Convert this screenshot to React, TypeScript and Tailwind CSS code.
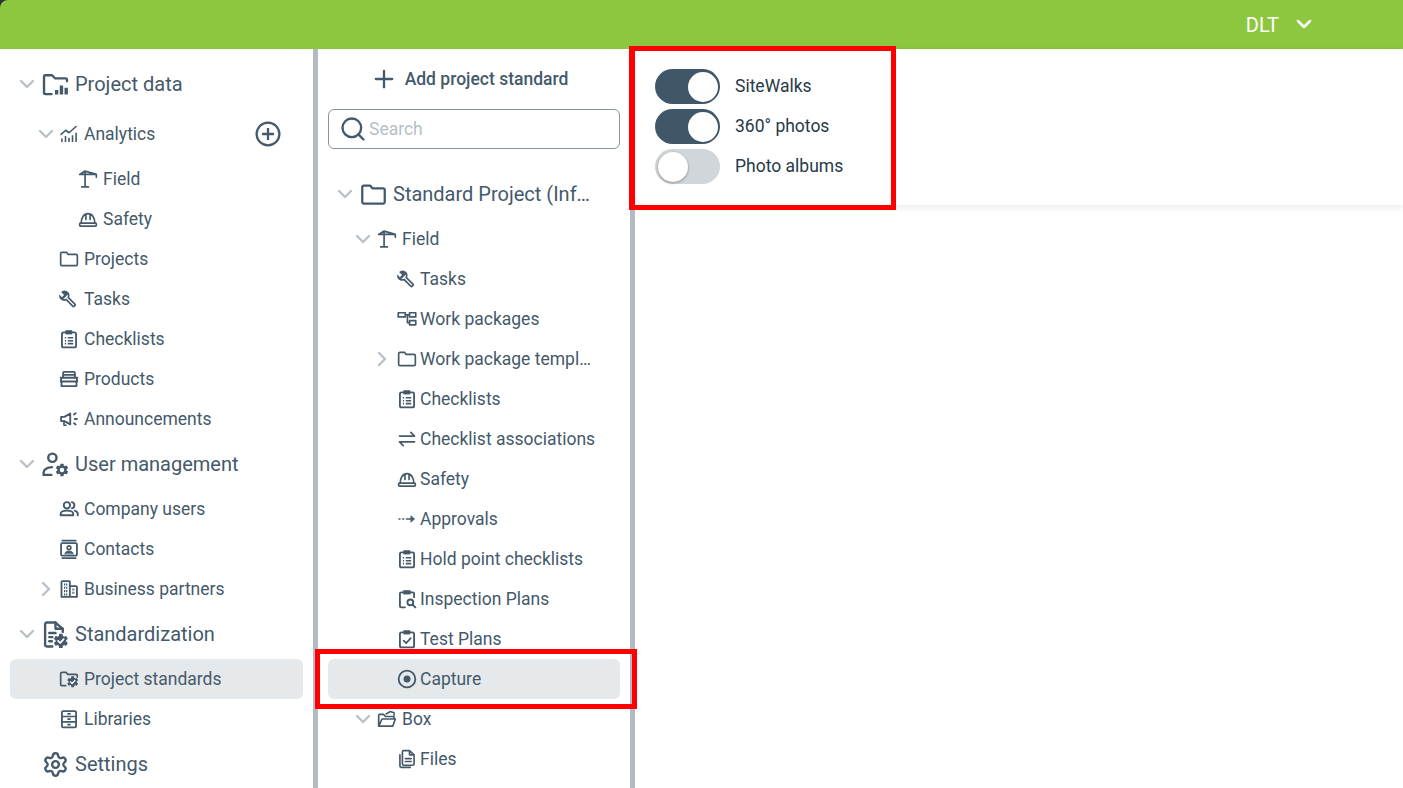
import React from "react";
import { ChevronDown, ChevronRight, Plus, Search, Settings } from "lucide-react";

type IconProps = { className?: string };

const COG =
  "M12,15.5A3.5,3.5 0 0,1 8.5,12A3.5,3.5 0 0,1 12,8.5A3.5,3.5 0 0,1 15.5,12A3.5,3.5 0 0,1 12,15.5M19.43,12.97C19.47,12.65 19.5,12.33 19.5,12C19.5,11.67 19.47,11.34 19.43,11L21.54,9.37C21.73,9.22 21.78,8.95 21.66,8.73L19.66,5.27C19.54,5.05 19.27,4.96 19.05,5.05L16.56,6.05C16.04,5.66 15.5,5.32 14.87,5.07L14.5,2.42C14.46,2.18 14.25,2 14,2H10C9.75,2 9.54,2.18 9.5,2.42L9.13,5.07C8.5,5.32 7.96,5.66 7.44,6.05L4.95,5.05C4.73,4.96 4.46,5.05 4.34,5.27L2.34,8.73C2.21,8.95 2.27,9.22 2.46,9.37L4.57,11C4.53,11.34 4.5,11.67 4.5,12C4.5,12.33 4.53,12.65 4.57,12.97L2.46,14.63C2.27,14.78 2.21,15.05 2.34,15.27L4.34,18.73C4.46,18.95 4.73,19.03 4.95,18.95L7.44,17.94C7.96,18.34 8.5,18.68 9.13,18.93L9.5,21.58C9.54,21.82 9.75,22 10,22H14C14.25,22 14.46,21.82 14.5,21.58L14.87,18.93C15.5,18.67 16.04,18.34 16.56,17.94L19.05,18.95C19.27,19.03 19.54,18.95 19.66,18.73L21.66,15.27C21.78,15.05 21.73,14.78 21.54,14.63L19.43,12.97Z";
const COG_SOLID =
  "M19.43,12.97C19.47,12.65 19.5,12.33 19.5,12C19.5,11.67 19.47,11.34 19.43,11L21.54,9.37C21.73,9.22 21.78,8.95 21.66,8.73L19.66,5.27C19.54,5.05 19.27,4.96 19.05,5.05L16.56,6.05C16.04,5.66 15.5,5.32 14.87,5.07L14.5,2.42C14.46,2.18 14.25,2 14,2H10C9.75,2 9.54,2.18 9.5,2.42L9.13,5.07C8.5,5.32 7.96,5.66 7.44,6.05L4.95,5.05C4.73,4.96 4.46,5.05 4.34,5.27L2.34,8.73C2.21,8.95 2.27,9.22 2.46,9.37L4.57,11C4.53,11.34 4.5,11.67 4.5,12C4.5,12.33 4.53,12.65 4.57,12.97L2.46,14.63C2.27,14.78 2.21,15.05 2.34,15.27L4.34,18.73C4.46,18.95 4.73,19.03 4.95,18.95L7.44,17.94C7.96,18.34 8.5,18.68 9.13,18.93L9.5,21.58C9.54,21.82 9.75,22 10,22H14C14.25,22 14.46,21.82 14.5,21.58L14.87,18.93C15.5,18.67 16.04,18.34 16.56,17.94L19.05,18.95C19.27,19.03 19.54,18.95 19.66,18.73L21.66,15.27C21.78,15.05 21.73,14.78 21.54,14.63L19.43,12.97Z";

function Svg({ className, children }: IconProps & { children: React.ReactNode }) {
  return (
    <svg viewBox="0 0 24 24" fill="none" stroke="currentColor" strokeWidth={2} strokeLinecap="round" strokeLinejoin="round" className={className}>
      {children}
    </svg>
  );
}

// cog with a white tick, used as a badge on two of the icons
function CheckCog({ transform }: { transform: string }) {
  return (
    <g transform={transform}>
      <path d={COG_SOLID} fill="currentColor" stroke="none" />
      <path d="M8 12l3 3 5-5.500" stroke="#fff" strokeWidth={2.400} fill="none" />
    </g>
  );
}

const ProjectDataIcon = (p: IconProps) => (
  <Svg {...p}>
    <path d="M8.500 20.500H3A1.200 1.200 0 0 1 1.800 19.300V5A1.200 1.200 0 0 1 3 3.800h6l2.500 2.700h9.500A1.200 1.200 0 0 1 22.200 7.700V9" strokeWidth={2.100} />
    <path d="M13 20.800v-4M17.300 20.800v-8M21.500 20.800v-6" strokeWidth={3} strokeLinecap="butt" />
  </Svg>
);
const AnalyticsIcon = (p: IconProps) => (
  <Svg {...p}>
    <path d="M2.500 12.500l5.500-5 4 3 8.500-7.500" strokeWidth={1.900} />
    <path d="M3.500 21.500v-4M7.800 21.500v-7M12 21.500v-5M16.200 21.500v-8M20.500 21.500v-11" strokeWidth={1.900} strokeLinecap="butt" />
  </Svg>
);
const CraneIcon = (p: IconProps) => (
  <Svg {...p}>
    <path d="M2 6.500h20v3.500M8.500 2.500v18.500M4.500 21.500h8M2 6.500l6.500-4 13.500 4" strokeWidth={2} />
  </Svg>
);
const HardHatIcon = (p: IconProps) => (
  <Svg {...p}>
    <path d="M3 20.500h18a1 1 0 0 0 1-1v-1.500a1 1 0 0 0-1-1H3a1 1 0 0 0-1 1v1.500a1 1 0 0 0 1 1z" />
    <path d="M3.800 17c0-6 3-11.500 8.200-11.500s8.200 5.500 8.200 11.500M9.500 6v6.500M14.500 6v6.500" />
  </Svg>
);
const FolderIcon = (p: IconProps) => (
  <Svg {...p}>
    <path d="M3.500 20A1.500 1.500 0 0 1 2 18.500v-13A1.500 1.500 0 0 1 3.500 4h5.500l2 2.500h9.500A1.500 1.500 0 0 1 22 8v10.500a1.500 1.500 0 0 1-1.500 1.500z" />
  </Svg>
);
const WrenchIcon = (p: IconProps) => (
  <svg viewBox="0 0 24 24" fill="currentColor" className={p.className}>
    <path d="M9.200 2.300a6 6 0 0 0-6.700 1.300l3.600 3.600-2.600 2.600-3.100-3.300a6 6 0 0 0 7.900 7.200l7.500 7.700a2.200 2.200 0 0 0 3.100 0l.9-.9a2.200 2.200 0 0 0 0-3.100l-7.600-7.600a6 6 0 0 0-3-7.500zm-1 2.200a4 4 0 0 1 2 5.200l-.3.800 8.500 8.500-1 1-8.500-8.700-.8.300a4 4 0 0 1-4.100-.8l1.300 1.200 5.300-5.300z" fillRule="evenodd" />
  </svg>
);
const ClipboardIcon = (p: IconProps) => (
  <Svg {...p}>
    <rect x="3.500" y="4" width="17" height="18" rx="2" strokeWidth={2.200} />
    <rect x="8.500" y="2" width="7" height="4" fill="currentColor" strokeWidth={1} />
    <path d="M7 10.500h1.500M7 14h1.500M7 17.500h1.500M10.500 10.500h6.500M10.500 14h6.500M10.500 17.500h6.500" strokeWidth={1.900} strokeLinecap="butt" />
  </Svg>
);
const ProductsIcon = (p: IconProps) => (
  <Svg {...p}>
    <path d="M5 10V4.500a1 1 0 0 1 1-1h12a1 1 0 0 1 1 1V10" strokeWidth={2.200} />
    <path d="M2 10.500h20M2 15h20M3 15h18v5.500H3zM2.500 10.500v4.500M21.500 10.500v4.500M5 7h14" strokeWidth={2.200} />
  </Svg>
);
const MegaphoneIcon = (p: IconProps) => (
  <Svg {...p}>
    <path d="M2.500 9.500h4l7-4v13l-7-4h-4z" strokeWidth={2.200} />
    <path d="M6 15v4.500h2.500" strokeWidth={2} />
    <path d="M18 6.500l2-1.500M19 12h2.500M18 17l2 1.500" strokeWidth={2.200} />
  </Svg>
);
const UserGearIcon = (p: IconProps) => (
  <svg viewBox="0 0 26 26" fill="none" stroke="currentColor" strokeWidth={2.300} strokeLinecap="round" className={p.className}>
    <circle cx="10" cy="6.500" r="4" />
    <path d="M1.500 22v-1c0-3 3-5 8-5.500M1.500 23h7.500" />
    <svg x="12" y="11" width="14.500" height="14.500" viewBox="0 0 24 24">
      <path d={COG} fill="currentColor" stroke="none" />
    </svg>
  </svg>
);
const UsersIcon = (p: IconProps) => (
  <Svg {...p}>
    <circle cx="9.500" cy="7.500" r="3.800" strokeWidth={2.300} />
    <path d="M2 19.500V18c0-2.500 3-4 7.500-4s7.500 1.500 7.500 4v1.500zM15.500 3.800a3.800 3.800 0 0 1 0 7.400M19 14c2 .7 3.500 2 3.500 4v1.500" strokeWidth={2.300} />
  </Svg>
);
const ContactsIcon = (p: IconProps) => (
  <Svg {...p}>
    <rect x="2.500" y="5" width="19" height="15" rx="1.500" strokeWidth={2.200} />
    <path d="M4 2h16M4 23h16" />
    <circle cx="12" cy="10.500" r="2.200" />
    <path d="M7 17.500c.5-2.200 2.500-3 5-3s4.500.8 5 3z" fill="currentColor" strokeWidth={1} />
  </Svg>
);
const BuildingIcon = (p: IconProps) => (
  <Svg {...p}>
    <path d="M3 21.500V3.500a1 1 0 0 1 1-1h8a1 1 0 0 1 1 1v18M13 8.500h7.500a1 1 0 0 1 1 1v12H3" strokeWidth={2.200} />
    <path d="M6 6.500h4M6 10.500h4M6 14.500h4M6 18.500h4M16 12.500h3M16 16.500h3" strokeWidth={2.500} strokeDasharray="1.500 1" strokeLinecap="butt" />
  </Svg>
);
const StandardizationIcon = (p: IconProps) => (
  <svg viewBox="0 0 26 26" fill="none" stroke="currentColor" strokeWidth={2.300} strokeLinecap="round" strokeLinejoin="round" className={p.className}>
    <path d="M10 24.500H4.500A1.500 1.500 0 0 1 3 23V3A1.500 1.500 0 0 1 4.500 1.500H13l7 6v3" />
    <path d="M13 1.500v6h7M7 11.500h6M7 15.500h3M7 19.500h2.500" />
    <CheckCog transform="translate(10 11) scale(.68)" />
  </svg>
);
const FolderCheckIcon = (p: IconProps) => (
  <Svg {...p}>
    <path d="M8 20H3.500A1.500 1.500 0 0 1 2 18.500v-13A1.500 1.500 0 0 1 3.500 4h5l2 2.500h10A1.500 1.500 0 0 1 22 8v1.500" />
    <CheckCog transform="translate(8.500 7.500) scale(.66)" />
  </Svg>
);
const LibrariesIcon = (p: IconProps) => (
  <Svg {...p}>
    <rect x="3.500" y="2.500" width="17" height="19.500" rx="1.500" strokeWidth={2.200} />
    <path d="M3.500 9h17M3.500 15.500h17M10 5.800h4M10 12.200h4M10 18.700h4" strokeWidth={2} strokeLinecap="butt" />
  </Svg>
);
const WorkPackagesIcon = (p: IconProps) => (
  <Svg {...p}>
    <rect x="1.500" y="4.500" width="8.500" height="5" strokeWidth={2} strokeLinecap="butt" />
    <rect x="15" y="4.500" width="7.500" height="5" strokeWidth={2} />
    <rect x="15" y="14" width="7.500" height="5" strokeWidth={2} />
    <path d="M10 7h5M12.500 7v9.500H15" strokeWidth={2} />
  </Svg>
);
const SwapIcon = (p: IconProps) => (
  <Svg {...p}>
    <path d="M3 8.500h18M16.500 4l4.500 4.500M21 15.500H3M7.500 20L3 15.500" />
  </Svg>
);
const ApprovalsIcon = (p: IconProps) => (
  <Svg {...p}>
    <path d="M2.500 12h1M7 12h1M11.500 12h7" />
    <path d="M17 8.500l4 3.500-4 3.500z" fill="currentColor" strokeWidth={1} />
  </Svg>
);
const InspectionIcon = (p: IconProps) => (
  <Svg {...p}>
    <path d="M9.500 22H5a1.500 1.500 0 0 1-1.500-1.500V5.500A1.500 1.500 0 0 1 5 4h2M17 4h2a1.500 1.500 0 0 1 1.500 1.500V10" strokeWidth={2.200} />
    <rect x="8" y="2" width="8" height="4" fill="currentColor" strokeWidth={1} />
    <circle cx="16" cy="16" r="3.500" strokeWidth={2.300} />
    <path d="M19 19l3 3" strokeWidth={2.300} />
  </Svg>
);
const TestPlanIcon = (p: IconProps) => (
  <Svg {...p}>
    <rect x="3.500" y="4" width="17" height="18" rx="2" strokeWidth={2.200} />
    <rect x="8.500" y="2" width="7" height="4" fill="currentColor" strokeWidth={1} />
    <path d="M8 14l3 3 5.500-6" />
  </Svg>
);
const CaptureIcon = (p: IconProps) => (
  <Svg {...p}>
    <circle cx="12" cy="12" r="10" strokeWidth={2.200} />
    <circle cx="12" cy="12" r="4.200" fill="currentColor" stroke="none" />
  </Svg>
);
const FolderOpenIcon = (p: IconProps) => (
  <Svg {...p}>
    <path d="M2 20.500V8a1.500 1.500 0 0 1 1.500-1.500H8l2 2.500h9a1.500 1.500 0 0 1 1.500 1.500V12M2 20.500h17l3-8.500H6z" />
    <path d="M11 6l5-3 4.500 1.500V8" strokeWidth={1.800} />
  </Svg>
);
const FilesIcon = (p: IconProps) => (
  <Svg {...p}>
    <path d="M8 2h7l5.500 5v11a1.500 1.500 0 0 1-1.500 1.500H8A1.500 1.500 0 0 1 6.500 18V3.500A1.500 1.500 0 0 1 8 2zM15 2v5h5.500M10 11.500h7M10 15h7" />
    <path d="M3.500 7v13.500A1.500 1.500 0 0 0 5 22h11" />
  </Svg>
);
const PlusCircleIcon = (p: IconProps) => (
  <Svg {...p}>
    <circle cx="12" cy="12" r="10.500" strokeWidth={2.100} />
    <path d="M12 6.500v11M6.500 12h11" strokeWidth={2.100} strokeLinecap="butt" />
  </Svg>
);

function Row({
  pad,
  slot,
  chevron,
  icon,
  label,
  big,
  active,
  right,
  className = "",
}: {
  pad: string;
  slot: string;
  chevron?: "down" | "right";
  icon: React.ReactNode;
  label: string;
  big?: boolean;
  active?: boolean;
  right?: React.ReactNode;
  className?: string;
}) {
  return (
    <div
      className={`flex items-center rounded-md ${pad} ${big ? "h-12 text-[20px]" : "h-10 text-[17.500px]"} ${active ? "bg-[#e6e9ec]" : ""} ${className}`}
    >
      <span className="flex w-5 shrink-0 justify-center text-[#b9c1c7]">
        {chevron === "down" && <ChevronDown className="h-6 w-6 shrink-0" strokeWidth={2.400} />}
        {chevron === "right" && <ChevronRight className="h-6 w-6 shrink-0" strokeWidth={2.400} />}
      </span>
      <span className={`flex shrink-0 items-center ${slot}`}>{icon}</span>
      <span className="truncate">{label}</span>
      {right}
    </div>
  );
}

function Toggle({ label, on }: { label: string; on: boolean }) {
  return (
    <div className="flex items-center gap-[15px]">
      <div className={`flex h-[35px] w-[65px] items-center rounded-full p-[2.500px] ${on ? "justify-end bg-[#3f5768]" : "justify-start bg-[#d1d6da]"}`}>
        <div className={`h-[30px] w-[30px] rounded-full bg-white ${on ? "" : "shadow-[0_1px_3px_rgba(0,0,0,0.35)]"}`} />
      </div>
      <span className="text-[17.500px] text-[#263a47]">{label}</span>
    </div>
  );
}

const L1 = "pl-[26px]";
const L2 = "pl-[45px]";
const SLOT1 = "w-7 pl-[3px]";
const ICON = "h-5 w-5";
const BIG = "h-[27px] w-[27px]";

function Sidebar() {
  return (
    <aside className="w-[313px] shrink-0 overflow-hidden px-[10px] pt-[11px]">
      <Row big pad="pl-[7px]" slot="w-[38px] pl-[5px]" chevron="down" icon={<ProjectDataIcon className={BIG} />} label="Project data" />
      <Row
        pad={L1}
        slot={SLOT1}
        chevron="down"
        icon={<AnalyticsIcon className={ICON} />}
        label="Analytics"
        className="!h-[51px] pt-[1px]"
        right={<PlusCircleIcon className="ml-auto mr-[22px] h-[26px] w-[26px] shrink-0" />}
      />
      <Row pad={L2} slot={SLOT1} icon={<CraneIcon className={ICON} />} label="Field" />
      <Row pad={L2} slot={SLOT1} icon={<HardHatIcon className={ICON} />} label="Safety" />
      <Row pad={L1} slot={SLOT1} icon={<FolderIcon className={ICON} />} label="Projects" />
      <Row pad={L1} slot={SLOT1} icon={<WrenchIcon className={ICON} />} label="Tasks" />
      <Row pad={L1} slot={SLOT1} icon={<ClipboardIcon className={ICON} />} label="Checklists" />
      <Row pad={L1} slot={SLOT1} icon={<ProductsIcon className={ICON} />} label="Products" />
      <Row pad={L1} slot={SLOT1} icon={<MegaphoneIcon className={ICON} />} label="Announcements" />
      <Row big pad="pl-[7px]" slot="w-[38px] pl-[5px]" chevron="down" icon={<UserGearIcon className={BIG} />} label="User management" className="my-[1px]" />
      <Row pad={L1} slot={SLOT1} icon={<UsersIcon className={ICON} />} label="Company users" />
      <Row pad={L1} slot={SLOT1} icon={<ContactsIcon className={ICON} />} label="Contacts" />
      <Row pad={L1} slot={SLOT1} chevron="right" icon={<BuildingIcon className={ICON} />} label="Business partners" />
      <Row big pad="pl-[7px]" slot="w-[38px] pl-[5px]" chevron="down" icon={<StandardizationIcon className={BIG} />} label="Standardization" className="my-[1px]" />
      <Row active pad={L1} slot={SLOT1} icon={<FolderCheckIcon className={ICON} />} label="Project standards" />
      <Row pad={L1} slot={SLOT1} icon={<LibrariesIcon className={ICON} />} label="Libraries" />
      <Row big pad="pl-[7px]" slot="w-[38px] pl-[5px]" icon={<Settings className={BIG} strokeWidth={2.100} />} label="Settings" className="mt-[1px]" />
    </aside>
  );
}

const M1 = "pl-[25px]";
const M2 = "pl-[44px]";
const MSLOT = "w-7 pl-[5px]";

function StandardsTree() {
  return (
    <section className="w-[322px] shrink-0 overflow-hidden border-x-[5px] border-[#b1bbc3] px-[10px]">
      <div className="flex h-[60px] items-center justify-center gap-[7px] pr-[10px] font-medium text-[17.500px]">
        <Plus className="h-7 w-7" strokeWidth={2} />
        Add project standard
      </div>
      <div className="flex h-10 items-center rounded-md border border-[#8696a1] pl-[10px]">
        <Search className="h-7 w-7 shrink-0" strokeWidth={2} />
        <span className="ml-[2px] pt-[1px] text-[17.500px] text-[#b7bfc5]">Search</span>
      </div>
      <div className="pt-[21px]">
        <Row big pad="pl-[7px]" slot="w-[38px] pl-[5px]" chevron="down" icon={<FolderIcon className="h-[27px] w-[27px]" />} label="Standard Project (Infrastructure)" className="mb-[1px] pr-[28px]" />
        <Row pad={M1} slot="w-[29px] pl-[4px]" chevron="down" icon={<CraneIcon className={ICON} />} label="Field" />
        <Row pad={M2} slot={MSLOT} icon={<WrenchIcon className={ICON} />} label="Tasks" />
        <Row pad={M2} slot={MSLOT} icon={<WorkPackagesIcon className={ICON} />} label="Work packages" />
        <Row pad={M2} slot={MSLOT} chevron="right" icon={<FolderIcon className={ICON} />} label="Work package templates" className="pr-[28px]" />
        <Row pad={M2} slot={MSLOT} icon={<ClipboardIcon className={ICON} />} label="Checklists" />
        <Row pad={M2} slot={MSLOT} icon={<SwapIcon className={ICON} />} label="Checklist associations" />
        <Row pad={M2} slot={MSLOT} icon={<HardHatIcon className={ICON} />} label="Safety" />
        <Row pad={M2} slot={MSLOT} icon={<ApprovalsIcon className={ICON} />} label="Approvals" />
        <Row pad={M2} slot={MSLOT} icon={<ClipboardIcon className={ICON} />} label="Hold point checklists" />
        <Row pad={M2} slot={MSLOT} icon={<InspectionIcon className={ICON} />} label="Inspection Plans" />
        <Row pad={M2} slot={MSLOT} icon={<TestPlanIcon className={ICON} />} label="Test Plans" />
        <Row active pad={M2} slot={MSLOT} icon={<CaptureIcon className={ICON} />} label="Capture" />
        <Row pad={M1} slot="w-[29px] pl-[4px]" chevron="down" icon={<FolderOpenIcon className={ICON} />} label="Box" />
        <Row pad={M2} slot={MSLOT} icon={<FilesIcon className={ICON} />} label="Files" />
      </div>
    </section>
  );
}

export default function App() {
  return (
    <div className="relative flex h-[788px] w-[1403px] flex-col overflow-hidden bg-white font-['Roboto',sans-serif] text-[#44596a]">
      <div className="bg-[#2f2d36]">
        <header className="flex h-[49px] shrink-0 items-center justify-end rounded-tl-[8px] bg-[#8dc73f] pr-[87px] text-white">
          <span className="text-[20px]">DLT</span>
          <ChevronDown className="ml-[13px] h-6 w-6 -translate-y-px" strokeWidth={2.500} />
        </header>
      </div>
      <div className="flex min-h-0 flex-1">
        <Sidebar />
        <StandardsTree />
        <main className="min-w-0 flex-1">
          <div className="flex h-[156px] flex-col gap-[5px] rounded-bl-xl bg-white pl-5 pt-5 shadow-[0_2px_8px_rgba(0,0,0,0.1)]">
            <Toggle on label="SiteWalks" />
            <Toggle on label="360° photos" />
            <Toggle on={false} label="Photo albums" />
          </div>
        </main>
      </div>
      {/* red annotation boxes from the screenshot */}
      <div className="pointer-events-none absolute left-[629px] top-[46px] h-[164px] w-[267px] border-[5px] border-l-[6px] border-[#ff0000]" />
      <div className="pointer-events-none absolute left-[315px] top-[649px] h-[60px] w-[322px] border-[5px] border-[#ff0000]" />
    </div>
  );
}
